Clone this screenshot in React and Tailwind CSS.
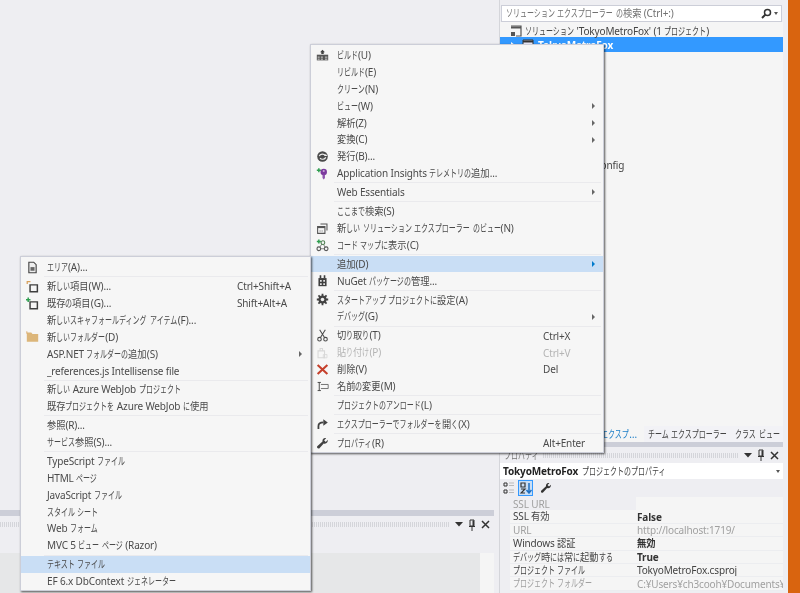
import React from 'react';

const jp = "font-['Noto_Sans','Noto_Sans_CJK_JP',sans-serif] text-[10px] leading-none";

// the reference uses a narrow UI font (Meiryo UI): kana and kanji get condensed, each char has a fixed advance
const T = ({ children }) =>
  String(children)
    .split(/([\u3040-\u30ff]+|[\u4e00-\u9fff]+)/)
    .filter(Boolean)
    .map((part, i) => {
      if (/^[\u3040-\u30ff]/.test(part))
        return <span key={i} className="inline-block whitespace-nowrap text-[10.5px] origin-left scale-x-[0.667]" style={{ width: part.length * 7 }}>{part}</span>;
      if (/^[\u4e00-\u9fff]/.test(part))
        return <span key={i} className="inline-block whitespace-nowrap text-[10.5px] origin-left scale-x-[0.88]" style={{ width: part.length * 9.2 }}>{part}</span>;
      return <span key={i} className="tracking-[-0.15px] whitespace-pre">{part}</span>;
    });

const Svg = ({ children }) => (
  <svg width="13" height="13" viewBox="0 0 16 16" className="shrink-0 ml-[3px]">{children}</svg>
);

const icons = {
  build: (
    <Svg>
      <path d="M8 1l3 3H9.500v2h-3V4H5z" fill="#424242" />
      <path d="M1 7h14v7H1z" fill="#555" />
      <path d="M2 10h2.500M6 10h2.500M11 10h3M2 12.500h2.500M6 12.500h2.500M11 12.500h3" stroke="#eee" strokeWidth="1" />
    </Svg>
  ),
  publish: (
    <Svg>
      <circle cx="8" cy="8" r="6.500" fill="#4a4a4a" />
      <path d="M4 7.500c1-3 6-3 7.500-.5M12 9c-1 3-5.500 3-7 1" stroke="#eee" strokeWidth="1.500" fill="none" />
      <path d="M10 7.500h4l-2-2.500z" fill="#eee" />
    </Svg>
  ),
  insights: (
    <Svg>
      <path d="M1 4h5M3.500 1.500v5" stroke="#2e9e4f" strokeWidth="1.800" />
      <circle cx="9.500" cy="6" r="4" fill="#7c3a9e" />
      <path d="M8 9.500h3v4l-1.500 2-1.500-2z" fill="#8e55ad" />
      <circle cx="9.500" cy="5" r="1.300" fill="#c9a8da" />
    </Svg>
  ),
  views: (
    <Svg>
      <path d="M5.500 2.500h8v8" stroke="#555" strokeWidth="1.300" fill="none" />
      <path d="M2 5.500h9v8.500H2z" fill="#f5f5f5" stroke="#555" strokeWidth="1.300" />
      <path d="M2 6.500h9" stroke="#555" strokeWidth="2" />
      <path d="M4.500 10h1v2h-1zM7 10h1v2H7z" fill="#888" />
    </Svg>
  ),
  codemap: (
    <Svg>
      <path d="M1 3h5M3.500 .5v5" stroke="#2e9e4f" strokeWidth="1.800" />
      <path d="M8 5l-4 6M8 5l4 6M4 12h8" stroke="#666" strokeWidth="1" />
      <circle cx="8.500" cy="4.500" r="2.300" fill="#f5f5f5" stroke="#4b7d4f" strokeWidth="1.300" />
      <circle cx="3.500" cy="12" r="2.300" fill="#f5f5f5" stroke="#555" strokeWidth="1.300" />
      <circle cx="12.500" cy="12" r="2.300" fill="#f5f5f5" stroke="#555" strokeWidth="1.300" />
    </Svg>
  ),
  nuget: (
    <Svg>
      <path d="M3 5h10v10H3z" fill="#3f3f3f" />
      <path d="M4.500 1.500h2V5h-2zM9.500 1.500h2V5h-2z" fill="#3f3f3f" />
      <path d="M5 7.500h2v2H5zM9 7.500h2v2H9zM5 11.500h2v2H5zM9 11.500h2v2H9z" fill="#eee" />
    </Svg>
  ),
  gear: (
    <Svg>
      <path d="M8 1v14M1 8h14M3 3l10 10M13 3L3 13" stroke="#424242" strokeWidth="2.200" />
      <circle cx="8" cy="8" r="5" fill="#424242" />
      <circle cx="8" cy="8" r="2.200" fill="#eee" />
    </Svg>
  ),
  cut: (
    <Svg>
      <path d="M4.500 1l6 9.500M11.500 1l-6 9.500" stroke="#4a4a4a" strokeWidth="1.300" fill="none" />
      <circle cx="4.300" cy="12.500" r="2.200" fill="none" stroke="#4a4a4a" strokeWidth="1.300" />
      <circle cx="11.700" cy="12.500" r="2.200" fill="none" stroke="#4a4a4a" strokeWidth="1.300" />
    </Svg>
  ),
  paste: (
    <Svg>
      <path d="M2.500 6h8v8.500h-8z" fill="none" stroke="#d8d8d8" strokeWidth="1.300" />
      <path d="M5 6V3h3v3" fill="none" stroke="#d8d8d8" strokeWidth="1.300" />
      <path d="M9 10.500h4.500v4H9z" fill="none" stroke="#d8d8d8" strokeWidth="1" />
    </Svg>
  ),
  del: (
    <Svg>
      <path d="M2 2.500l12 11M14 2.500l-12 11" stroke="#c5402c" strokeWidth="2.600" />
    </Svg>
  ),
  rename: (
    <Svg>
      <path d="M2 3h4M2 13h4M4 3v10" stroke="#4a4a4a" strokeWidth="1.200" fill="none" />
      <path d="M6 5.500h9v5H6" stroke="#666" strokeWidth="1.100" fill="none" />
    </Svg>
  ),
  open: (
    <Svg>
      <path d="M3 13.500V10c0-3 2.500-4.500 6-4.500" stroke="#424242" strokeWidth="2.200" fill="none" />
      <path d="M9 1.500L14.500 5.500 9 9.500z" fill="#424242" />
    </Svg>
  ),
  wrench: (
    <Svg>
      <path d="M14.500 3.500L12 6 10 4l2.500-2.500C10 .5 7.500 2.500 8 5.500L1.500 11.500c-1 1.500 1 3.500 2.500 2.500L9.500 8c3 1 5.500-1.500 5-4.500z" fill="#424242" />
    </Svg>
  ),
  area: (
    <Svg>
      <path d="M3.500 1.500h6l3 3v10h-9z" fill="#eee" stroke="#444" strokeWidth="1.400" />
      <path d="M5.500 7.500h5v4.500h-5z" fill="#666" />
    </Svg>
  ),
  newItem: (
    <Svg>
      <path d="M1.500 5V2h4" stroke="#d9a15c" strokeWidth="1.500" fill="none" />
      <path d="M5 6h9v8.500H5z" fill="#f5f5f5" stroke="#3f3f3f" strokeWidth="1.800" />
    </Svg>
  ),
  existing: (
    <Svg>
      <path d="M0 3.500h5.500M2.700 .7v5.500" stroke="#2e9e4f" strokeWidth="1.800" />
      <path d="M5 6h9v8.500H5z" fill="#f5f5f5" stroke="#3f3f3f" strokeWidth="1.800" />
    </Svg>
  ),
  folder: (
    <Svg>
      <path d="M1 3h5.500l1.500 2h7v9.500H1z" fill="#dcb67a" />
      <path d="M1 1.500v3" stroke="#d9a15c" strokeWidth="1" />
    </Svg>
  ),
};

const Sep = () => (
  <div className="h-[2.16px] pl-[23px] pr-[2px] flex items-center">
    <div className="h-px w-full bg-[#eaeaed]" />
  </div>
);

const Row = ({ item, shortcutWidth }) => (
  <div className={`h-[16.85px] flex items-center pl-[2px] pr-[1px] ${item.on ? 'bg-[#c9def5]' : ''}`}>
    <div className="w-[24px] shrink-0 flex items-center">{item.icon && icons[item.icon]}</div>
    <span className={`flex-1 whitespace-nowrap ${item.off ? 'text-[#b4b4b4]' : 'text-[#4a4a4a]'}`}><T>{item.label}</T></span>
    <div className={`${shortcutWidth} shrink-0 flex items-center`}>
      {item.key && <span className={`whitespace-nowrap ${item.off ? 'text-[#b4b4b4]' : 'text-[#4a4a4a]'}`}><T>{item.key}</T></span>}
      {item.arrow && (
        <span className={`ml-auto mr-[7px] w-0 h-0 border-y-[3px] border-y-transparent border-l-[3px] ${item.on ? 'border-l-[#007acc]' : 'border-l-[#666]'}`} />
      )}
    </div>
  </div>
);

const Menu = ({ items, shortcutWidth, className }) => (
  <div className={`absolute bg-[#f6f6f6] border border-[#ccced8] pt-[2px] shadow-[1px_1px_2px_rgba(0,0,0,0.65)] ${className}`}>
    {items.map((item, i) =>
      item === '-' ? <Sep key={i} /> : <Row key={i} item={item} shortcutWidth={shortcutWidth} />
    )}
  </div>
);

const projectMenu = [
  { label: 'ビルド(U)', icon: 'build' },
  { label: 'リビルド(E)' },
  { label: 'クリーン(N)' },
  { label: 'ビュー(W)', arrow: true },
  { label: '解析(Z)', arrow: true },
  { label: '変換(C)', arrow: true },
  { label: '発行(B)...', icon: 'publish' },
  { label: 'Application Insights テレメトリの追加...', icon: 'insights' },
  '-',
  { label: 'Web Essentials', arrow: true },
  '-',
  { label: 'ここまで検索(S)' },
  { label: '新しい ソリューション エクスプローラー のビュー(N)', icon: 'views' },
  { label: 'コード マップに表示(C)', icon: 'codemap' },
  '-',
  { label: '追加(D)', arrow: true, on: true },
  { label: 'NuGet パッケージの管理...', icon: 'nuget' },
  '-',
  { label: 'スタートアップ プロジェクトに設定(A)', icon: 'gear' },
  { label: 'デバッグ(G)', arrow: true },
  '-',
  { label: '切り取り(T)', icon: 'cut', key: 'Ctrl+X' },
  { label: '貼り付け(P)', icon: 'paste', key: 'Ctrl+V', off: true },
  { label: '削除(V)', icon: 'del', key: 'Del' },
  { label: '名前の変更(M)', icon: 'rename' },
  '-',
  { label: 'プロジェクトのアンロード(L)' },
  '-',
  { label: 'エクスプローラーでフォルダーを開く(X)', icon: 'open' },
  '-',
  { label: 'プロパティ(R)', icon: 'wrench', key: 'Alt+Enter' },
];

const addMenu = [
  { label: 'エリア(A)...', icon: 'area' },
  '-',
  { label: '新しい項目(W)...', icon: 'newItem', key: 'Ctrl+Shift+A' },
  { label: '既存の項目(G)...', icon: 'existing', key: 'Shift+Alt+A' },
  { label: '新しいスキャフォールディング アイテム(F)...' },
  { label: '新しいフォルダー(D)', icon: 'folder' },
  { label: 'ASP.NET フォルダーの追加(S)', arrow: true },
  { label: '_references.js Intellisense file' },
  '-',
  { label: '新しい Azure WebJob プロジェクト' },
  { label: '既存プロジェクトを Azure WebJob に使用' },
  '-',
  { label: '参照(R)...' },
  { label: 'サービス参照(S)...' },
  '-',
  { label: 'TypeScript ファイル' },
  { label: 'HTML ページ' },
  { label: 'JavaScript ファイル' },
  { label: 'スタイル シート' },
  { label: 'Web フォーム' },
  { label: 'MVC 5 ビュー ページ (Razor)' },
  '-',
  { label: 'テキスト ファイル', on: true },
  { label: 'EF 6.x DbContext ジェネレーター' },
];

const props = [
  { name: 'SSL URL', value: '', muted: true, first: true },
  { name: 'SSL 有効', value: 'False', bold: true },
  { name: 'URL', value: 'http://localhost:1719/', muted: true },
  { name: 'Windows 認証', value: '無効', bold: true },
  { name: 'デバッグ時には常に起動する', value: 'True', bold: true },
  { name: 'プロジェクト ファイル', value: 'TokyoMetroFox.csproj' },
  { name: 'プロジェクト フォルダー', value: 'C:¥Users¥ch3cooh¥Documents¥', muted: true },
];

const hatch = "bg-[repeating-linear-gradient(90deg,#d4d5da_0,#d4d5da_1px,transparent_1px,transparent_2px)]";

const PanelButtons = () => (
  <div className="flex items-center gap-[5px] shrink-0">
    <svg width="8" height="5" viewBox="0 0 8 5"><path d="M0 0h8L4 4.500z" fill="#333" /></svg>
    <svg width="8" height="12" viewBox="0 0 8 12"><path d="M2 1h4v6H2zM1 7.500h6M4 8v4" stroke="#333" strokeWidth="1" fill="none" /><path d="M4.500 1.500h1.500v5.500H4.500z" fill="#333" /></svg>
    <svg width="9" height="9" viewBox="0 0 9 9"><path d="M1 1l7 7M8 1l-7 7" stroke="#333" strokeWidth="1.500" /></svg>
  </div>
);

export default function App() {
  return (
    <div className={`relative w-[800px] h-[593px] overflow-hidden flex bg-[#eeeef2] blur-[0.4px] ${jp}`}>
      {/* editor + bottom tool window */}
      <div className="w-[494px] shrink-0 flex flex-col">
        <div className="flex-1" />
        <div className="h-[83px] flex flex-col">
          <div className="h-[6px] bg-[#ccced8]" />
          <div className="h-[15px] mt-[1px] flex items-center pr-[4px]">
            <div className={`flex-1 h-[5px] mr-[6px] ${hatch}`} />
            <PanelButtons />
          </div>
          <div className="flex-1 mt-[21px] flex">
            <div className="flex-1 bg-[#e6e7e8]" />
            <div className="w-[14px] bg-[#f5f5f5]" />
          </div>
        </div>
      </div>

      {/* right dock */}
      <div className="ml-[5px] w-[289px] shrink-0 flex flex-col border-l border-[#d4d5da] pr-[5px]">
        <div className="h-[5px] shrink-0" />
        <div className="h-[17px] mx-[1px] bg-white border border-[#ccced8] flex items-center pl-[4px] pr-[3px] text-[#717171] shrink-0">
          <span className="flex-1 whitespace-nowrap"><T>ソリューション エクスプローラー の検索 (Ctrl+:)</T></span>
          <svg width="11" height="11" viewBox="0 0 11 11" className="mr-[2px]"><circle cx="6.500" cy="4.500" r="3" fill="none" stroke="#333" strokeWidth="1.500" /><path d="M4.500 6.500L1 10" stroke="#333" strokeWidth="2" /></svg>
          <span className="w-0 h-0 border-x-[2.5px] border-x-transparent border-t-[3px] border-t-[#555]" />
        </div>
        <div className="flex-1 bg-[#f5f5f5] pt-[3px] text-[#444] min-h-0">
          <div className="h-[12px] flex items-center pl-[10px] gap-[3px] whitespace-nowrap">
            <svg width="12" height="12" viewBox="0 0 12 12"><path d="M1 1h10v10H6" fill="none" stroke="#555" strokeWidth="1.200" /><path d="M1 2.500h10" stroke="#555" strokeWidth="2" /><path d="M1 7h4v4H1z" fill="#555" /></svg>
            <span><T>ソリューション 'TokyoMetroFox' (1 プロジェクト)</T></span>
          </div>
          <div className="h-[15px] bg-[#3399ff] flex items-center pl-[11px] text-white font-bold whitespace-nowrap">
            <span className="w-0 h-0 border-y-[3px] border-y-transparent border-l-[4px] border-l-white mr-[7px]" />
            <svg width="12" height="12" viewBox="0 0 12 12" className="mr-[4px]"><path d="M1 1h10v10H1z" fill="#eef" stroke="#333" strokeWidth="1" /><path d="M1 2.500h10" stroke="#333" strokeWidth="2" /></svg>
            <span><T>TokyoMetroFox</T></span>
          </div>
          <div className="mt-[108px] pl-[73px] whitespace-nowrap"><T>Web.config</T></div>
        </div>
        <div className="h-[16px] flex shrink-0">
          <div className="w-[144px] bg-[#f5f5f5] flex items-center justify-end pr-[7px] text-[#1e7fc8] whitespace-nowrap"><span><T>エクスプ…</T></span></div>
          <div className="flex-1 flex items-center gap-[8px] pl-[4px] text-[#444] bg-[#f2f2f6] whitespace-nowrap">
            <span><T>チーム エクスプローラー</T></span>
            <span><T>クラス ビュー</T></span>
          </div>
        </div>
        <div className="h-[5px] bg-[#ccced8] shrink-0" />
        <div className="h-[16px] flex items-center pl-[4px] pr-[4px] text-[#777] shrink-0">
          <span className="whitespace-nowrap mr-[4px]"><T>プロパティ</T></span>
          <div className={`flex-1 h-[5px] mr-[6px] ${hatch}`} />
          <PanelButtons />
        </div>
        <div className="h-[16px] bg-white flex items-center pl-[3px] pr-[3px] text-[#444] shrink-0 whitespace-nowrap">
          <b className="font-bold text-[#222] mr-[4px]"><T>TokyoMetroFox</T></b>
          <span className="flex-1"><T>プロジェクトのプロパティ</T></span>
          <span className="w-0 h-0 border-x-[2.5px] border-x-transparent border-t-[3px] border-t-[#555]" />
        </div>
        <div className="h-[18px] flex items-center pl-[3px] gap-[3px] shrink-0">
          <svg width="12" height="12" viewBox="0 0 12 12"><path d="M1 1h3v3H1zM1 8h3v3H1z" fill="none" stroke="#333" /><path d="M6 1h5M6 3.500h5M6 8h5M6 10.500h5" stroke="#bbb" /></svg>
          <div className="w-[15px] h-[16px] bg-[#c9def5] border border-[#3399ff] flex items-center justify-center">
            <svg width="12" height="12" viewBox="0 0 12 12"><path d="M1 1h4v4H1zM1 7h4L1 11h4" fill="none" stroke="#333" strokeWidth="1.200" /><path d="M9 1v9M6.500 8l2.500 3 2.500-3" fill="none" stroke="#1e6fc0" strokeWidth="1.500" /></svg>
          </div>
          <svg width="12" height="12" viewBox="0 0 16 16" className="ml-[4px]"><path d="M14.500 3.500L12 6 10 4l2.500-2.500C10 .5 7.500 2.500 8 5.500L1.500 11.500c-1 1.500 1 3.500 2.500 2.500L9.500 8c3 1 5.500-1.500 5-4.500z" fill="#333" /></svg>
        </div>
        <div className="h-[96px] shrink-0 overflow-hidden">
          {props.map((p) => (
            <div key={p.name} className={`h-[13.4px] flex items-center ${p.first ? '' : 'ml-[10px] bg-[#f5f5f5] border-b border-[#ecedf0]'}`}>
              <span className={`shrink-0 whitespace-nowrap ${p.first ? 'ml-[13px] w-[123px]' : 'ml-[3px] w-[123px]'} ${p.muted ? 'text-[#a0a0a0]' : 'text-[#444]'}`}><T>{p.name}</T></span>
              <span className={`flex-1 h-full flex items-center pl-[1px] whitespace-nowrap overflow-hidden ${p.first ? 'bg-[#f5f5f5]' : ''} ${p.bold ? 'font-bold text-[#333]' : p.muted ? 'text-[#a0a0a0]' : 'text-[#444]'}`}><span><T>{p.value}</T></span></span>
            </div>
          ))}
        </div>
      </div>

      <div className="w-[12px] shrink-0 bg-[#d9640f]" />

      <Menu items={projectMenu} shortcutWidth="w-[59px]" className="left-[310px] top-[44px] w-[294px]" />
      <Menu items={addMenu} shortcutWidth="w-[72px]" className="left-[20px] top-[256px] w-[291px]" />
    </div>
  );
}
